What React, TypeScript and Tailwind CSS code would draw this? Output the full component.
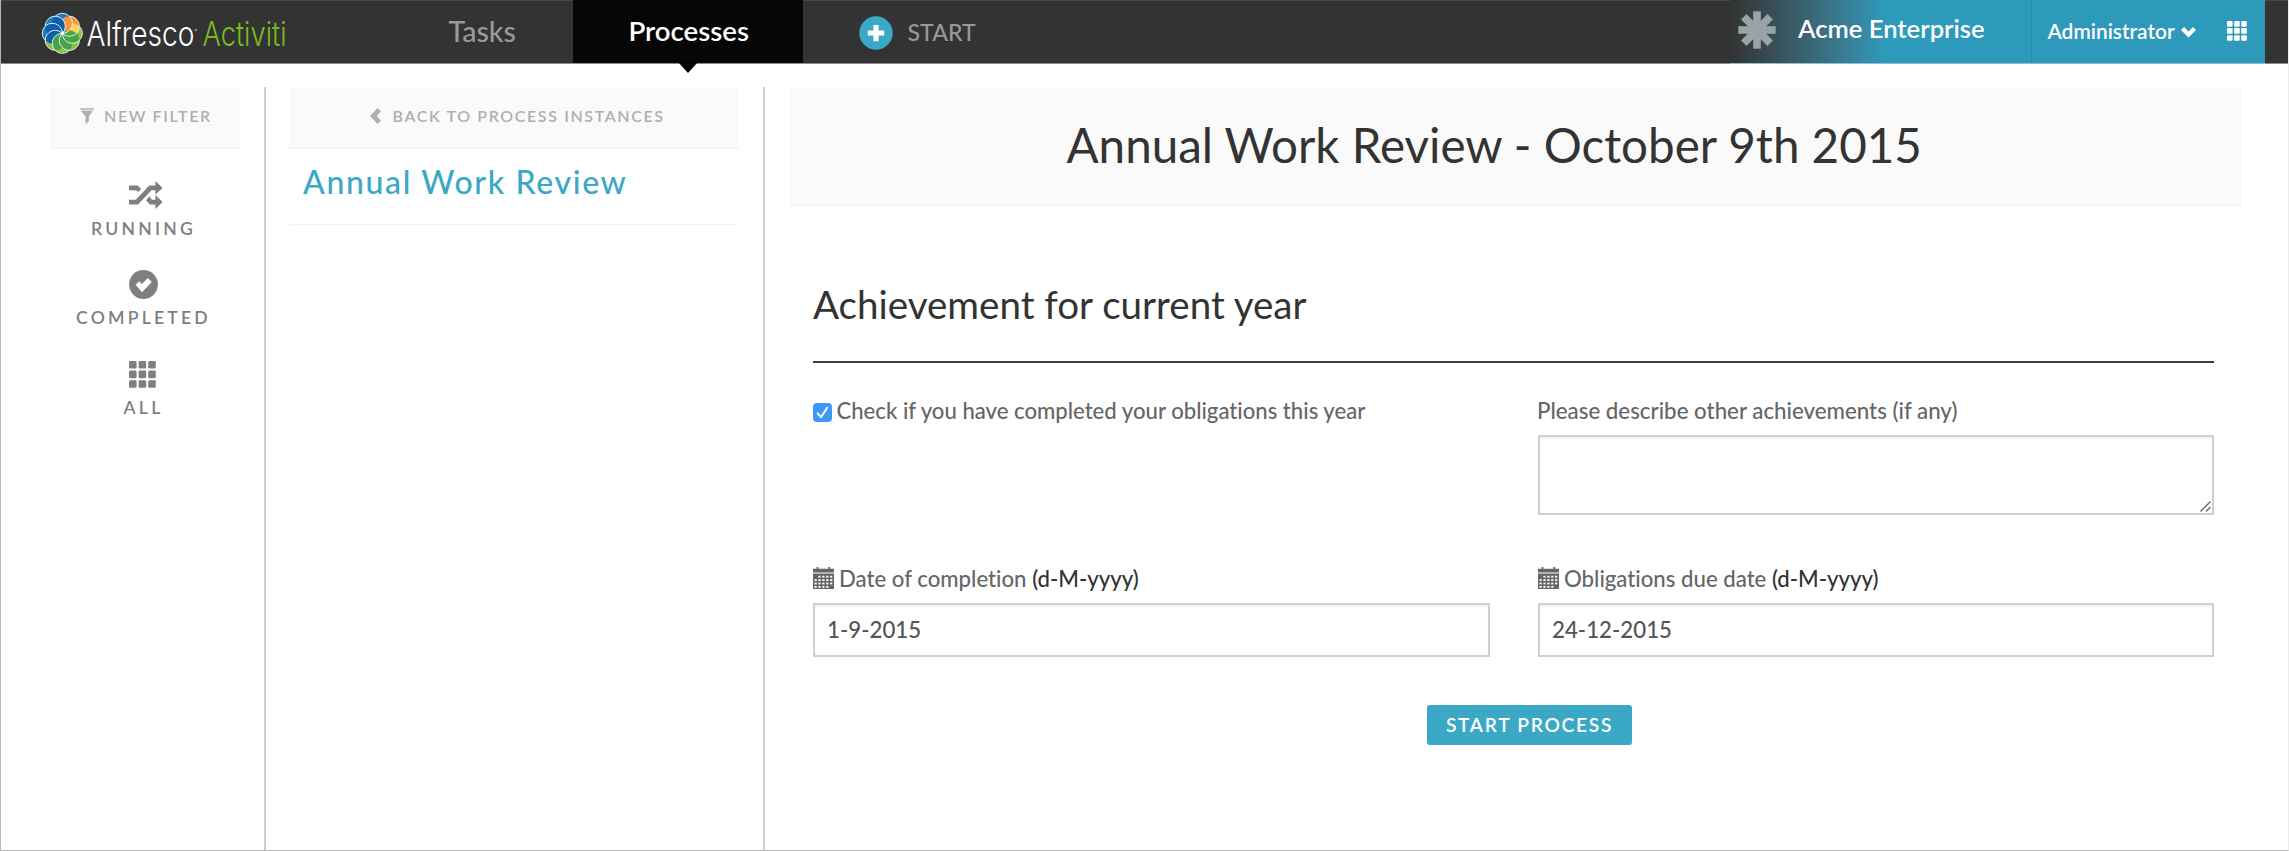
import type { ReactNode } from 'react';

const R = 10;
const at = (radius: number, deg: number) => {
  const a = (deg * Math.PI) / 180;
  return `${(radius * Math.cos(a)).toFixed(2)} ${(-radius * Math.sin(a)).toFixed(2)}`;
};
const REACH = 2 * R * Math.cos(Math.PI / 8);

// Petals run counter-clockwise from the right; "inner" fills the overlap with the next petal.
const PETALS = [
  { angle: 0, fill: '#8fc247', inner: '#ffd750' },
  { angle: 45, fill: '#fb963a', inner: '#fb963a' },
  { angle: 90, fill: '#1a80c6', inner: '#0d5fa9' },
  { angle: 135, fill: '#1a80c6', inner: '#0d5fa9' },
  { angle: 180, fill: '#1a80c6', inner: '#0d5fa9' },
  { angle: 225, fill: '#8fc247', inner: '#46a448' },
  { angle: 270, fill: '#8fc247', inner: '#46a448' },
  { angle: 315, fill: '#8fc247', inner: '#46a448' },
];

function Logo() {
  return (
    <svg className="block h-[63px] w-[260px] overflow-visible" viewBox="0 0 260 63">
      <g transform="translate(32.3 33.3)">
        {PETALS.map((p) => {
          const [x, y] = at(R, p.angle).split(' ');
          return <circle key={p.angle} cx={x} cy={y} r={R} fill={p.fill} />;
        })}
        {PETALS.map((p) => (
          <path
            key={p.angle}
            d={`M0 0A${R} ${R} 0 0 1 ${at(REACH, p.angle + 22.5)}A${R} ${R} 0 0 1 0 0Z`}
            fill={p.inner}
          />
        ))}
        {PETALS.map((p) => (
          <path
            key={p.angle}
            d={`M0 0A${R} ${R} 0 1 0 ${at(REACH, p.angle + 22.5)}`}
            fill="none"
            stroke="#e4eef2"
            strokeWidth="1"
          />
        ))}
        <circle r="1.8" fill="#fff" />
      </g>
      <text x="56.5" y="46.3" fontFamily="Inter, sans-serif" fontWeight="300" fontSize="33.5" textLength="108" lengthAdjust="spacingAndGlyphs" fill="#fff">
        Alfresco
      </text>
      <circle cx="166" cy="30" r="1.3" fill="#888" />
      <text x="172.5" y="46.3" fontFamily="Inter, sans-serif" fontWeight="300" fontSize="33.5" textLength="84" lengthAdjust="spacingAndGlyphs" fill="#78be20">
        Activiti
      </text>
    </svg>
  );
}

function Grid({ className }: { className: string }) {
  return (
    <svg className={className} viewBox="0 0 27 27" fill="currentColor">
      {[0, 9.6, 19.2].map((y) =>
        [0, 9.6, 19.2].map((x) => <rect key={`${x}-${y}`} x={x} y={y} width="7.6" height="7.6" rx="1.4" />),
      )}
    </svg>
  );
}

function Shuffle() {
  return (
    <svg className="h-7 w-[34px]" viewBox="0 0 34 28" fill="currentColor">
      <path d="M0 4.4H8.6L12.2 8L9.2 11L7 9.2H0Z" />
      <path d="M0 18.8H6.8L20.2 4.4H26.4V0L33.6 7L26.4 13.6V9.2H22.4L9 23.6H0Z" />
      <path d="M20.4 15.6L23 18.8H26.4V14L33.6 21L26.4 28V23.6H21L17 19.2Z" />
    </svg>
  );
}

function CheckCircle() {
  return (
    <svg className="h-[29px] w-[34px]" viewBox="0 0 34 29">
      <circle cx="14.5" cy="14.5" r="14.4" fill="currentColor" />
      <path d="M6.6 14.8L10.2 11.3L13 13.9L18.9 7.9L22.8 11.9L13 22.2Z" fill="#fff" />
    </svg>
  );
}

function Funnel() {
  return (
    <svg className="h-4 w-[14px]" viewBox="0 0 14 16" fill="currentColor">
      <path d="M0 0H14L13 2.4H1Z" opacity=".75" />
      <path d="M1.2 3H12.8L8.9 8.6V13.2L5.6 16V8.6Z" />
    </svg>
  );
}

const CELLS = [8.8, 12.2, 15.6, 19].flatMap((y, row) =>
  [1.5, 5.4, 9.3, 13.2, 17.1].filter((_, col) => !(row === 0 && col === 0) && !(row === 3 && col === 4)).map((x) => ({ x, y })),
);

function Calendar() {
  return (
    <svg className="-mt-0.5 h-[22px] w-[21px] shrink-0" viewBox="0 0 21 22">
      <path d="M0 1.8H3.6V0H5.4V1.8H15.4V0H17.2V1.8H21V5.6H0ZM0 6.6H21V22H0Z" fill="currentColor" />
      {CELLS.map((c) => (
        <rect key={`${c.x}-${c.y}`} x={c.x} y={c.y} width="2.2" height="1.8" fill="#fff" />
      ))}
    </svg>
  );
}

function Header() {
  return (
    <header className="flex h-16 shrink-0 border-t border-b border-t-[#484848] border-b-[#8a8a8a] bg-[#333] whitespace-nowrap">
      <div className="-mt-px ml-[29px] w-[260px]">
        <Logo />
      </div>
      <nav className="flex flex-1">
        <a className="ml-[158.5px] w-[124.5px] text-[28.5px] leading-[60px] text-[#999]">Tasks</a>
        <a className="relative -mt-px h-[63px] w-[230px] bg-[#060606] pl-[55.5px] text-[27.6px] leading-[62px] font-semibold text-white">
          Processes
          <svg className="absolute top-[63px] left-[106px] h-2.5 w-[18px]" viewBox="0 0 18 10">
            <path d="M0 0H18L9 10Z" fill="#000" />
          </svg>
        </a>
        <a className="flex pl-[55.5px] text-[23.1px] leading-[63px] text-[#999]">
          <svg className="mt-[14.5px] mr-[15px] h-[34px] w-[34px]" viewBox="0 0 34 34">
            <circle cx="17" cy="17" r="16.7" fill="#3ba8c5" />
            <path d="M14.4 9H19.6V14.4H25.2V19.6H19.6V25.2H14.4V19.6H8.8V14.4H14.4Z" fill="#fff" />
          </svg>
          START
        </a>
      </nav>
      <div className="-mt-px flex h-16 w-[535px] border-b border-[#8cc0d0] bg-linear-to-r from-[#333] to-[#2d9abb] to-[156px] font-semibold text-white">
        <svg className="mt-[11px] ml-2 h-[38px] w-[38px]" viewBox="-19 -19 38 38" fill="#9aa3a6">
          {[0, 45, 90, 135].map((a) => (
            <rect key={a} x="-3.8" y="-18.7" width="7.6" height="37.4" transform={`rotate(${a})`} />
          ))}
        </svg>
        <span className="ml-[22px] w-[233px] text-[25.6px] leading-[57px]">Acme Enterprise</span>
        <span className="flex w-[234px] border-l border-[#2789a8] pl-[15.5px] text-[20.9px] leading-[61px]">
          Administrator
          <svg className="mt-[26.5px] ml-1.5 h-[11px] w-[15px]" viewBox="0 0 15 11">
            <path d="M0 3L3 0L7.5 4.6L12 0L15 3L7.5 10.6Z" fill="#fff" />
          </svg>
          <Grid className="mt-[20.5px] ml-[31.5px] h-5 w-5" />
        </span>
      </div>
      <div className="w-[23px]" />
    </header>
  );
}

function Filter({ icon, label }: { icon: ReactNode; label: string }) {
  return (
    <a className="flex h-[89.6px] flex-col items-center text-[#7f7f7f]">
      <span className="flex h-[34px] w-[34px] items-center">{icon}</span>
      <span className="mt-[6.5px] mr-[5px] text-[17.6px] leading-5 font-semibold tracking-[3.2px]">{label}</span>
    </a>
  );
}

function DateField({ label, value }: { label: string; value: string }) {
  return (
    <div>
      <label className="flex h-8 items-center pb-px text-[22.2px] text-[#666]">
        <Calendar />
        <span className="ml-[5px]">
          {label} <span className="text-[#333]">(d-M-yyyy)</span>
        </span>
      </label>
      <input
        className="mt-2 block h-[54px] w-full border-2 border-[#cfcfcf] pb-0.5 pl-3 text-[22.3px] text-[#555] shadow-[inset_0_2px_2px_rgba(0,0,0,0.06)]"
        defaultValue={value}
      />
    </div>
  );
}

export default function App() {
  return (
    <div className="flex h-[851px] w-[2289px] flex-col overflow-hidden border-r border-b border-l border-r-[#ececec] border-b-[#b5b5b5] border-l-[#b5b5b5] bg-white font-[Lato,sans-serif] font-medium [font-variant-ligatures:none]">
      <Header />
      <div className="flex min-h-0 flex-1 pt-[23px]">
        <aside className="w-[265px] shrink-0 border-r-2 border-[#cfcfcf] pl-[49px]">
          <button className="flex h-[61.5px] w-[190px] items-center border-b border-[#f0f0f0] bg-[#fafafa] pb-0.5 pl-[30px] text-base font-semibold tracking-[1.65px] text-[#acb0b0]">
            <Funnel />
            <span className="ml-[10px]">NEW FILTER</span>
          </button>
          <div className="mt-[29.5px] w-[192px]">
            <Filter icon={<Shuffle />} label="RUNNING" />
            <Filter icon={<CheckCircle />} label="COMPLETED" />
            <Filter icon={<Grid className="h-[27px] w-[27px]" />} label="ALL" />
          </div>
        </aside>
        <section className="w-[499px] shrink-0 border-r-2 border-[#cfcfcf] pl-[23px]">
          <button className="flex h-[61.5px] w-[450px] items-center border-b border-[#f0f0f0] bg-[#fafafa] pb-0.5 pl-[81px] text-base font-semibold tracking-[1.62px] text-[#acb0b0]">
            <svg className="h-4 w-[11px]" viewBox="0 0 11 16" fill="currentColor">
              <path d="M0 8L7.6 0L11 3.3L6.8 8L11 12.7L7.6 16Z" />
            </svg>
            <span className="ml-[11.5px]">BACK TO PROCESS INSTANCES</span>
          </button>
          <div className="h-[76.5px] w-[449px] border-b-[1.5px] border-[#f3f3f3] pl-[14px] text-[32px] leading-[66px] tracking-[1.65px] text-[#3ba8c5]">
            Annual Work Review
          </div>
        </section>
        <main className="pl-6">
          <h1 className="h-[119px] w-[1452px] border-b border-[#f0f0f0] bg-[#fafafa] pl-[277.5px] text-[47.55px] leading-[115px] font-normal text-[#333]">
            Annual Work Review - October 9th 2015
          </h1>
          <div className="ml-6 w-[1401px]">
            <h2 className="mt-[75px] h-[82px] border-b-2 border-[#3c3f3f] text-[38.55px] leading-[47px] font-normal text-[#333]">
              Achievement for current year
            </h2>
            <div className="mt-8 grid grid-cols-[677px_676px] gap-x-12">
              <label className="flex h-8 items-center pb-px text-[22.13px] text-[#666]">
                <svg className="mt-1 mr-[4.5px] h-[19px] w-[19px]" viewBox="0 0 19 19">
                  <rect width="19" height="19" rx="4" fill="#3f97f8" />
                  <path d="M4.6 10.4L8 14.2L14.2 4.8" fill="none" stroke="#fff" strokeWidth="2" strokeLinecap="round" strokeLinejoin="round" />
                </svg>
                Check if you have completed your obligations this year
              </label>
              <div className="h-[168px]">
                <label className="-ml-px block h-8 text-[22.3px] leading-[31px] text-[#666]">Please describe other achievements (if any)</label>
                <div className="relative mt-2">
                  <textarea className="block h-20 w-full resize-none border-2 border-[#cfcfcf] shadow-[inset_0_2px_2px_rgba(0,0,0,0.06)]" />
                  <svg className="absolute right-[3px] bottom-[3px] h-[11px] w-[11px]" viewBox="0 0 11 11">
                    <path d="M0.5 10.5L10.5 0.5M6 10.5L10.5 6" stroke="#666" strokeWidth="1.4" />
                  </svg>
                </div>
              </div>
              <DateField label="Date of completion" value="1-9-2015" />
              <DateField label="Obligations due date" value="24-12-2015" />
            </div>
            <button className="mt-12 ml-[614px] flex h-10 w-[205px] items-center justify-center rounded-[3px] bg-[#3ba8c5] text-[19.2px] font-semibold tracking-[1.7px] text-white">
              START PROCESS
            </button>
          </div>
        </main>
      </div>
    </div>
  );
}
